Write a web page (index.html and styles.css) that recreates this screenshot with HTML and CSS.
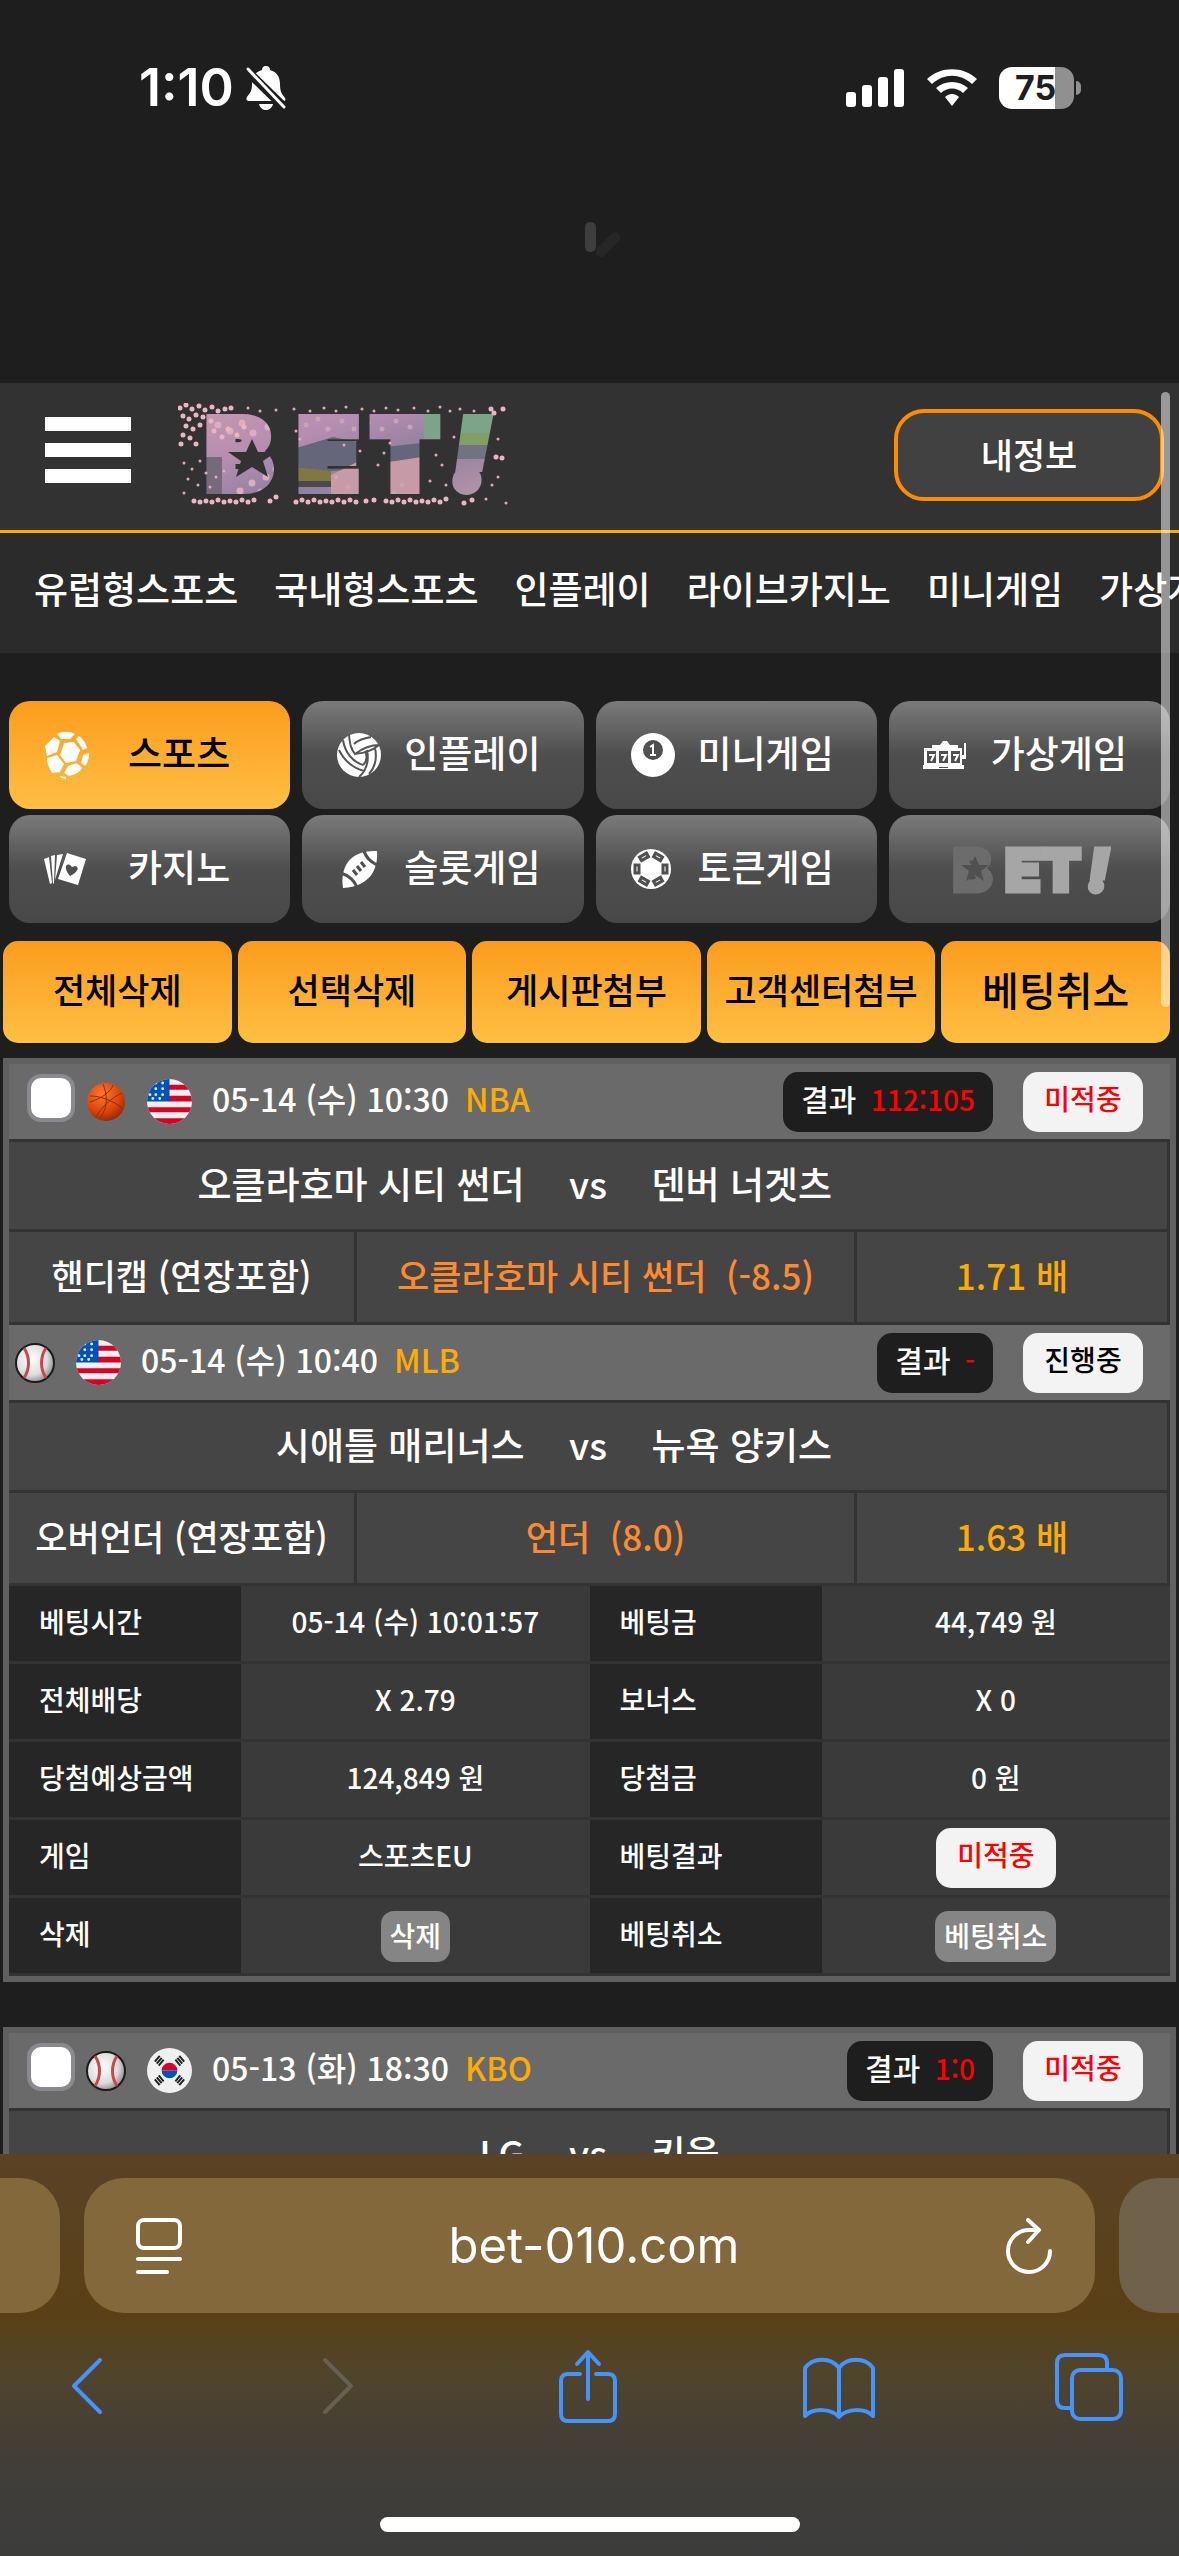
FILE: index.html
```html
<!DOCTYPE html>
<html lang="ko">
<head>
    <meta charset="UTF-8">
    <meta name="viewport" content="width=device-width, initial-scale=1.0">
    <title>BET!</title>
    <link rel="stylesheet" href="styles.css">
</head>
<body>
    <!-- shared icons -->
    <svg class="defs" width="0" height="0">
        <symbol id="basketball" viewBox="0 0 42 42">
            <circle cx="21" cy="21" r="19" fill="url(#orangeBall)"/>
            <path d="M5 15c10 0 22 4 32 12M18 3c4 10 6 24-4 35M37 12C28 16 16 26 11 36M28 4c-2 6-10 13-23 17" fill="none" stroke="#8e2f0a" stroke-width="1"/>
        </symbol>
        <symbol id="baseball" viewBox="0 0 42 42">
            <circle cx="21" cy="21" r="19" fill="url(#whiteBall)" stroke="#1b1b1b" stroke-width="2"/>
            <path d="M10 6c6 9 6 21 0 30M32 6c-6 9-6 21 0 30" fill="none" stroke="#c8474c" stroke-width="3"/>
        </symbol>
        <symbol id="usa" viewBox="0 0 46 46">
            <g clip-path="url(#round)">
                <path fill="#f0f0f0" d="M0 0h46v46H0z"/>
                <path fill="#d80027" d="M22 6h24v5H22zM22 17h24v6H22zM0 29h46v5H0zM0 40h46v6H0z"/>
                <path fill="#0052b4" d="M0 0h23v23H0z"/>
                <path d="M9 4h0M16 4h0M9 10h0M16 10h0M3 16h0M9 16h0M16 16h0M6 20h0M13 20h0" stroke="#d8e4f5" stroke-width="3" stroke-linecap="round"/>
            </g>
        </symbol>
        <symbol id="korea" viewBox="0 0 46 46">
            <circle cx="23" cy="23" r="23" fill="#f0f0f0"/>
            <path fill="#d80027" d="M15 23a8 8 0 0 1 16 0z"/>
            <path fill="#0052b4" d="M15 23a8 8 0 0 0 16 0z"/>
            <path d="M8 14l5-6M10 16l5-6M12 18l5-6M38 14l-5-6M36 16l-5-6M34 18l-5-6M8 32l5 6M10 30l5 6M12 28l5 6M38 32l-5 6M36 30l-5 6M34 28l-5 6" stroke="#222" stroke-width="2"/>
        </symbol>
        <defs>
            <radialGradient id="orangeBall" cx=".4" cy=".3" r=".8"><stop offset="0" stop-color="#ff7a2c"/><stop offset=".6" stop-color="#d94308"/><stop offset="1" stop-color="#7a2204"/></radialGradient>
            <radialGradient id="whiteBall" cx=".4" cy=".4" r=".7"><stop offset="0" stop-color="#fff"/><stop offset=".6" stop-color="#dcdcdc"/><stop offset="1" stop-color="#777"/></radialGradient>
            <clipPath id="round"><circle cx="23" cy="23" r="23"/></clipPath>
        </defs>
    </svg>

    <div class="top">
        <div class="status">
            <span class="time">1:10</span>
            <svg class="bell" width="42" height="44" viewBox="0 0 42 44">
                <path fill="#fff" d="M21 0c3 0 4 2 4 4 7 2 10 7 10 14 0 8 2 10 5 14 1 2 0 3-2 3H4c-3 0-3-2-2-4 3-4 5-6 5-13C7 11 10 6 17 4c0-2 1-4 4-4zM14 38h14c-1 4-4 6-7 6s-6-2-7-6z"/>
                <path d="M1 4l38 37" stroke="#1e1e1e" stroke-width="9"/>
                <path d="M3 3l36 38" stroke="#fff" stroke-width="3" stroke-linecap="round"/>
            </svg>
            <span class="spacer"></span>
            <svg width="58" height="38" viewBox="0 0 58 38" fill="#fff">
                <rect x="0" y="23" width="10" height="15" rx="3"/>
                <rect x="16" y="16" width="10" height="22" rx="3"/>
                <rect x="32" y="8" width="10" height="30" rx="3"/>
                <rect x="48" y="0" width="10" height="38" rx="3"/>
            </svg>
            <svg class="wifi" width="50" height="38" viewBox="0 0 50 38" fill="#fff">
                <path d="M0 10C14-3 36-3 50 10l-5 5C33 4 17 4 5 15z"/>
                <path d="M9 19c9-8 23-8 32 0l-5 5c-6-6-16-6-22 0z"/>
                <path d="M18 28c4-4 10-4 14 0l-7 9z"/>
            </svg>
            <span class="battery">75</span>
        </div>
        <svg class="spinner" width="80" height="80" viewBox="0 0 80 80">
            <rect x="35" y="0" width="11" height="30" rx="5" fill="#3e3e3e"/>
            <rect x="35" y="0" width="11" height="30" rx="5" fill="#262626" transform="rotate(45 40 40)"/>
        </svg>
    </div>

    <div class="page">
        <div class="header">
            <button class="menu" aria-label="메뉴"><i></i><i></i><i></i></button>
            <a href="#" class="logo">
                <svg width="330" height="104" viewBox="0 0 330 104">
                    <defs>
                        <linearGradient id="blossom" x1="0" y1="0" x2="1" y2="1">
                            <stop offset="0" stop-color="#c99bb0"/><stop offset=".35" stop-color="#b58db0"/>
                            <stop offset=".6" stop-color="#8e80a0"/><stop offset="1" stop-color="#c09aa8"/>
                        </linearGradient>
                        <mask id="word">
                            <g class="word"><text y="86" x="29 121 194">BET</text><text class="slant" y="86" x="274">!</text></g>
                        </mask>
                    </defs>
                    <g mask="url(#word)">
                        <path fill="url(#blossom)" d="M0 0h330v104H0z"/>
                        <path fill="#77697c" d="M20 54h24v44H20z"/>
                        <path fill="#66667a" d="M115 46l40-12 50 10 40-4v20l-90 8h-40z"/>
                        <path fill="#80793f" d="M115 64l38 4v14h-38z"/>
                        <path fill="#4e4650" d="M115 78h38v6h-38z"/>
                        <path fill="#7da388" d="M246 10h80v26h-80z"/>
                        <path fill="#7f9f66" d="M280 30h40v14h-40z"/>
                        <path fill="#6f7480" d="M276 42h40v14h-40z"/>
                        <path fill="#c79aa8" d="M153 72l40-20v44h-40zM204 60l40-6v44h-40z"/>
                        <path d="M40 22h0M52 28h0M64 20h0M75 30h0M90 24h0M100 34h0M62 88h0M88 74h0M74 80h0M98 66h0M106 44h0" stroke="#dcaec0" stroke-width="7" stroke-linecap="round"/>
                        <path d="M128 22h0M140 16h0M150 26h0M164 18h0M176 26h0M190 20h0M204 26h0M218 18h0M232 24h0M210 72h0M224 82h0M216 90h0M170 84h0M82 88h0M108 78h0" stroke="#c8a4b8" stroke-width="5" stroke-linecap="round"/>
                    </g>
                    <path fill="#323232" d="M74 36l6 13h18l-13 9 5 16-16-10-16 10 5-16-13-9h18z"/>
                    <path class="petals" d="M2 5h0M8 2h0M14 6h0M21 3h0M27 7h0M34 4h0M40 8h0M47 6h0M53 5h0M5 13h0M11 16h0M18 12h0M25 14h0M33 18h0M8 23h0M15 26h0M22 22h0M5 32h0M12 35h0M3 41h0M18 41h0M36 28h0M44 34h0M50 26h0M59 32h0M66 24h0"/>
                    <path class="petals" d="M16 98h0M22 99h0M28 98h0M34 99h0M40 97h0M46 99h0M52 98h0M58 99h0M64 97h0M70 99h0M76 97h0M92 98h0M98 94h0M118 99h0M124 97h0M130 99h0M136 97h0M142 99h0M148 98h0M154 99h0M160 97h0M166 99h0M172 97h0M178 99h0M188 98h0M196 97h0M208 98h0M214 99h0M220 97h0M226 99h0M232 97h0M238 99h0M244 98h0M250 99h0M256 97h0M262 99h0M268 96h0M286 100h0M294 97h0M316 10h0M313 6h0M325 6h0M318 54h0M324 55h0"/>
                    <path class="specks" d="M70 5h0M82 8h0M98 7h0M116 6h0M132 8h0M146 5h0M158 8h0M168 4h0M184 6h0M196 8h0M208 5h0M220 7h0M236 5h0M250 8h0M262 4h0M272 8h0M282 6h0M296 8h0M6 60h0M14 66h0M22 58h0M28 70h0M10 76h0M20 82h0M32 84h0M6 90h0M38 74h0M46 68h0M118 28h0M122 36h0M166 42h0M182 48h0M158 74h0M200 62h0M206 50h0M212 40h0M258 52h0M264 62h0M252 78h0M276 34h0M268 82h0M320 74h0M314 82h0M308 96h0M328 100h0M320 36h0"/>
                </svg>
            </a>
            <button class="my">내정보</button>
        </div>

        <div class="nav">
            <a href="#">유럽형스포츠</a>
            <a href="#">국내형스포츠</a>
            <a href="#">인플레이</a>
            <a href="#">라이브카지노</a>
            <a href="#">미니게임</a>
            <a href="#">가상게임</a>
        </div>

        <div class="games">
            <button class="game active">
                <svg viewBox="0 0 48 48" fill="#fff">
                    <path d="M15 3c6-3 12-3 18 0l-5 5h-9zM37 5c4 3 7 7 8 12l-4 2-7-11zM3 15l9-9 6 4-3 11-10 4zM22 12l10-1 6 8-4 11-10 2-6-8zM41 24l6-2c0 6-1 9-4 13l-4-3zM5 27l10-3 7 9-4 8-8 1C7 37 5 33 5 27zM26 35l9-3 5 5c-3 5-8 7-13 8l-5-3zM18 45l6 1v2l-5-1z"/>
                </svg>
                <span>스포츠</span>
            </button>
            <button class="game">
                <svg viewBox="0 0 48 48">
                    <circle cx="24" cy="24" r="22" fill="#fff"/>
                    <path d="M14 4c1 10 2 14 6 19 8-6 15-9 24-9M20 23c7-1 16-2 24-9M19 13c4-4 11-6 17-7M4 19c6 12 14 18 25 21M8 9c2 13 10 22 20 25M28 34c5-5 4-10 2-14M24 46c9-8 10-17 8-27M34 43c7-8 8-17 6-26" fill="none" stroke="#555" stroke-width="2"/>
                </svg>
                <span>인플레이</span>
            </button>
            <button class="game">
                <svg viewBox="0 0 48 48">
                    <circle cx="24" cy="24" r="22" fill="#fff"/>
                    <circle cx="24" cy="19" r="10" fill="#505050"/>
                    <path d="M21 16l3-2v10M21 24h6" fill="none" stroke="#fff" stroke-width="2"/>
                </svg>
                <span>미니게임</span>
            </button>
            <button class="game">
                <svg viewBox="0 0 48 48">
                    <path fill="#fff" d="M10 14h8l3-4h4l3 4h8v3h4v17H2V17h8zM42 12h2v16h-4v-4h2zM1 34h41v4H1z"/>
                    <path fill="#505050" d="M5 20h9v12H5zM17 20h9v12h-9zM29 20h9v12h-9zM17 36h9v1h-9z"/>
                    <path d="M7 24h5l-3 6M19 24h5l-3 6M31 24h5l-3 6" fill="none" stroke="#fff" stroke-width="2"/>
                </svg>
                <span>가상게임</span>
            </button>
            <button class="game">
                <svg viewBox="0 0 48 48">
                    <path fill="#fff" d="M2 14l5-2 3 26-2 1zM9 11l4-1-1 28-1 1zM15 10l6-1-8 26zM25 8l19 6-8 26-20-6z"/>
                    <path fill="#505050" d="M28 31c-7-8-4-13 0-11l2 2 3-1c5 1 3 6-5 10z"/>
                </svg>
                <span>카지노</span>
            </button>
            <button class="game">
                <svg viewBox="0 0 48 48">
                    <path fill="#fff" d="M42 6c1 15-4 35-34 37C5 24 13 5 42 6z"/>
                    <path d="M29 6c2 7 7 11 13 14M6 28c6 2 13 7 16 14" fill="none" stroke="#505050" stroke-width="3"/>
                    <path d="M18 25l4 5M22 21l4 5M26 17l4 5" stroke="#505050" stroke-width="3"/>
                </svg>
                <span>슬롯게임</span>
            </button>
            <button class="game">
                <svg viewBox="0 0 48 48">
                    <circle cx="22" cy="24" r="20" fill="#fff"/>
                    <g fill="#fff" stroke="#505050" stroke-width="3">
                        <path id="mark" d="M6 20h4v8H6z"/>
                        <use href="#mark" transform="rotate(60 22 24)"/>
                        <use href="#mark" transform="rotate(120 22 24)"/>
                        <use href="#mark" transform="rotate(180 22 24)"/>
                        <use href="#mark" transform="rotate(240 22 24)"/>
                        <use href="#mark" transform="rotate(300 22 24)"/>
                    </g>
                </svg>
                <span>토큰게임</span>
            </button>
            <button class="game brand">
                <svg width="164" height="52" viewBox="0 0 164 52">
                    <g class="small-word">
                        <text fill="#6c6c6c" stroke="#6c6c6c" y="48" x="6">B</text>
                        <text fill="#a6a6a6" stroke="#a6a6a6" y="48" x="58 94">ET</text>
                        <text class="slant" fill="#a6a6a6" stroke="#a6a6a6" y="48" x="140">!</text>
                    </g>
                    <path fill="#505050" d="M28 13l4 9h10l-8 6 3 10-9-6-9 6 3-10-8-6h10z"/>
                </svg>
            </button>
        </div>

        <div class="actions">
            <button>전체삭제</button>
            <button>선택삭제</button>
            <button>게시판첨부</button>
            <button>고객센터첨부</button>
            <button class="cancel">베팅취소</button>
        </div>

        <div class="bet">
            <div class="match-head">
                <input type="checkbox" aria-label="선택">
                <svg class="ball"><use href="#basketball"/></svg>
                <svg class="flag"><use href="#usa"/></svg>
                <span class="date">05-14 (수) 10:30</span>
                <span class="league">NBA</span>
                <span class="result">결과 <b>112:105</b></span>
                <span class="pill lose">미적중</span>
            </div>
            <div class="teams"><span>오클라호마 시티 썬더</span><span>vs</span><span>덴버 너겟츠</span></div>
            <div class="odds"><span>핸디캡 (연장포함)</span><span class="pick">오클라호마 시티 썬더&nbsp; (-8.5)</span><span class="rate">1.71 배</span></div>

            <div class="match-head">
                <svg class="ball"><use href="#baseball"/></svg>
                <svg class="flag"><use href="#usa"/></svg>
                <span class="date">05-14 (수) 10:40</span>
                <span class="league">MLB</span>
                <span class="result">결과 <b>-</b></span>
                <span class="pill">진행중</span>
            </div>
            <div class="teams"><span>시애틀 매리너스</span><span>vs</span><span>뉴욕 양키스</span></div>
            <div class="odds"><span>오버언더 (연장포함)</span><span class="pick">언더&nbsp; (8.0)</span><span class="rate">1.63 배</span></div>

            <table class="detail">
                <tr>
                    <th>베팅시간</th><td>05-14 (수) 10:01:57</td>
                    <th>베팅금</th><td>44,749 원</td>
                </tr>
                <tr>
                    <th>전체배당</th><td>X 2.79</td>
                    <th>보너스</th><td>X 0</td>
                </tr>
                <tr>
                    <th>당첨예상금액</th><td>124,849 원</td>
                    <th>당첨금</th><td>0 원</td>
                </tr>
                <tr>
                    <th>게임</th><td>스포츠EU</td>
                    <th>베팅결과</th><td><span class="pill lose">미적중</span></td>
                </tr>
                <tr>
                    <th>삭제</th><td><button>삭제</button></td>
                    <th>베팅취소</th><td><button>베팅취소</button></td>
                </tr>
            </table>
        </div>

        <div class="bet">
            <div class="match-head">
                <input type="checkbox" aria-label="선택">
                <svg class="ball"><use href="#baseball"/></svg>
                <svg class="flag"><use href="#korea"/></svg>
                <span class="date">05-13 (화) 18:30</span>
                <span class="league">KBO</span>
                <span class="result">결과 <b>1:0</b></span>
                <span class="pill lose">미적중</span>
            </div>
            <div class="teams"><span>LG</span><span>vs</span><span>키움</span></div>
        </div>
        <div class="scrollbar"></div>
    </div>

    <div class="browser">
        <div class="tabs">
            <div class="tab side"></div>
            <div class="tab address">
                <button aria-label="페이지 메뉴">
                    <svg width="46" height="56" viewBox="0 0 46 56" fill="none" stroke="#fff" stroke-width="4" stroke-linecap="round">
                        <rect x="2" y="2" width="42" height="28" rx="6"/><path d="M2 41h42M2 54h29"/>
                    </svg>
                </button>
                <span>bet-010.com</span>
                <button aria-label="새로고침">
                    <svg width="46" height="56" viewBox="0 0 46 56" fill="none" stroke="#fff" stroke-width="4" stroke-linecap="round" stroke-linejoin="round">
                        <path d="M44 33a21 21 0 1 1-21-21h10M22 2l11 10-11 12"/>
                    </svg>
                </button>
            </div>
            <div class="tab side"></div>
        </div>
        <div class="toolbar">
            <button aria-label="뒤로"><svg width="34" height="76" viewBox="0 0 34 76"><path d="M30 12L4 38l26 26"/></svg></button>
            <button aria-label="앞으로" disabled><svg width="34" height="76" viewBox="0 0 34 76"><path d="M4 12l26 26L4 64"/></svg></button>
            <button aria-label="공유"><svg width="60" height="76" viewBox="0 0 60 76"><path d="M22 26H10q-7 0-7 7v33q0 7 7 7h40q7 0 7-7V33q0-7-7-7H38M30 51V5M19 16L30 4l11 12"/></svg></button>
            <button aria-label="책갈피"><svg width="74" height="76" viewBox="0 0 74 76"><path d="M37 20C29 9 11 9 3 20v48c8-8 26-8 34 1 8-9 26-9 34-1V20C63 9 45 9 37 20zM37 20v49"/></svg></button>
            <button aria-label="탭"><svg width="70" height="76" viewBox="0 0 70 76"><path d="M18 60h-7q-8 0-8-8V15q0-8 8-8h34q8 0 8 8v7"/><rect x="18" y="22" width="49" height="49" rx="8"/></svg></button>
        </div>
        <div class="home"></div>
    </div>
</body>
</html>
```
FILE: styles.css
```css
* {
    box-sizing: border-box;
}

body {
    margin: 0;
    height: 100vh;
    display: flex;
    flex-direction: column;
    overflow: hidden;
    background: #1e1e1e;
    color: #fff;
    font-family: "Noto Sans CJK KR", sans-serif;
    font-weight: 500;
}

button {
    padding: 0;
    border: none;
    background: none;
    color: inherit;
    font-family: inherit;
    font-weight: inherit;
}

svg {
    display: block;
    flex: none;
}

.defs {
    position: absolute;
}

/* phone status bar */
.top {
    flex: none;
    height: 383px;
}

.status {
    display: flex;
    align-items: center;
    height: 112px;
    padding: 64px 105px 0 139px;
}

.time {
    font: 600 52px/48px Inter, sans-serif;
}

.bell {
    margin-left: 11px;
}

.spacer {
    flex: 1;
}

.wifi {
    margin: 0 22px 0 23px;
}

.battery {
    position: relative;
    width: 75px;
    height: 42px;
    padding-left: 16px;
    border-radius: 13px;
    background: linear-gradient(90deg, #fff 75%, #909090 75%);
    color: #1e1e1e;
    font: 700 34px/42px Inter, sans-serif;
}

.battery::after {
    content: "";
    position: absolute;
    left: 77px;
    top: 14px;
    width: 5px;
    height: 14px;
    border-radius: 0 5px 5px 0;
    background: #909090;
}

.spinner {
    margin: 110px auto 0;
}

/* site */
.page {
    position: relative;
    flex: 1;
    min-height: 0;
    overflow: hidden;
}

.scrollbar {
    position: absolute;
    top: 9px;
    right: 9px;
    width: 9px;
    height: 615px;
    border-radius: 5px;
    background: rgba(255, 255, 255, 0.5);
}

.header {
    display: flex;
    align-items: center;
    height: 150px;
    padding: 0 15px 3px 45px;
    border-bottom: 3px solid #ffab00;
    background: #323232;
}

.menu {
    display: flex;
    flex-direction: column;
    gap: 12px;
    width: 86px;
    margin-bottom: 10px;
}

.menu i {
    height: 14px;
    background: #fff;
}

.logo {
    margin: 0 auto 0 47px;
}

.word {
    fill: #fff;
    stroke: #fff;
    stroke-width: 10;
    font: 900 96px Inter, sans-serif;
}

.small-word {
    stroke-width: 5;
    font: 900 58px Inter, sans-serif;
}

.slant {
    font-style: italic;
}

.petals {
    stroke: #eeb4c4;
    stroke-width: 5;
    stroke-linecap: round;
}

.specks {
    stroke: #e3aabb;
    stroke-width: 3;
    stroke-linecap: round;
}

.my {
    width: 270px;
    height: 92px;
    padding-bottom: 4px;
    border: 4px solid #ff8c00;
    border-radius: 30px;
    background: #414141;
    font-size: 35px;
}

.nav {
    display: flex;
    gap: 36px;
    height: 120px;
    padding-left: 34px;
    background: #2b2b2b;
    font-size: 37px;
    line-height: 110px;
    white-space: nowrap;
}

.nav a {
    color: #fff;
    text-decoration: none;
}

.games {
    display: grid;
    grid-template-columns: repeat(4, 1fr);
    gap: 6px 12px;
    margin-top: 48px;
    padding: 0 9px;
}

.game {
    display: flex;
    align-items: center;
    height: 108px;
    padding: 0 22px 0 33px;
    border-radius: 21px;
    background: linear-gradient(#7a7a7a, #4e4e4e 50%, #484848);
    font-size: 37px;
}

.game svg {
    width: 48px;
    height: 48px;
}

.game span {
    flex: 1;
    padding-bottom: 7px;
    text-align: center;
}

.game.active {
    background: linear-gradient(#fc9c1e, #ffbf42);
    color: #000;
}

.game.brand {
    justify-content: center;
    padding: 0;
}

.game.brand svg {
    width: 164px;
    height: 52px;
}

.actions {
    display: grid;
    grid-template-columns: repeat(5, 1fr);
    gap: 6px;
    margin-top: 18px;
    padding: 0 9px 0 3px;
}

.actions button {
    height: 102px;
    padding-bottom: 7px;
    border-radius: 15px;
    background: linear-gradient(#fc9c1e, #ffbf42);
    color: #000;
    font-size: 35px;
    white-space: nowrap;
}

.actions .cancel {
    font-size: 40px;
}

.bet {
    margin: 15px 3px 45px;
    border: 6px solid #606060;
}

.bet + .bet {
    margin-top: 0;
}

.match-head {
    display: flex;
    align-items: center;
    height: 75px;
    padding: 0 27px 0 5px;
    background: #6a6a6a;
}

.match-head input {
    appearance: none;
    width: 48px;
    height: 48px;
    margin: 0 10px 8px 13px;
    border: 4px solid #8a8a8e;
    border-radius: 14px;
    background: #fff;
}

.ball {
    width: 42px;
    height: 42px;
    margin-right: 20px;
}

.flag {
    width: 45px;
    height: 45px;
    margin-right: 20px;
}

.date,
.league {
    padding-bottom: 7px;
    font-size: 32px;
}

.league {
    margin: 0 auto 0 16px;
    color: #ffab00;
}

.result,
.pill {
    display: inline-block;
    height: 60px;
    border-radius: 15px;
    font-size: 28px;
    line-height: 53px;
}

.result {
    margin-right: 30px;
    padding: 0 18px;
    background: #1e1e1e;
    font-size: 30px;
}

.result b {
    margin-left: 6px;
    color: #f00;
    font-size: 28px;
    font-weight: 500;
}

.pill {
    width: 120px;
    background: #f3f3f3;
    color: #000;
    text-align: center;
}

.pill.lose {
    color: #f00;
}

.teams,
.odds {
    display: grid;
    border-right: 3px solid #333;
    border-bottom: 3px solid #333;
    background: #454545;
    text-align: center;
    white-space: nowrap;
}

.teams span,
.odds span {
    padding-bottom: 4px;
}

.teams {
    grid-template-columns: 1fr 127px 1fr;
    border-top: 3px solid #333;
    font-size: 37px;
    line-height: 83px;
}

.teams span:first-child {
    text-align: right;
}

.teams span:last-child {
    text-align: left;
}

.odds {
    grid-template-columns: 345fr 500fr 313fr;
    font-size: 35px;
    line-height: 86px;
}

.odds span + span {
    border-left: 3px solid #333;
}

.pick {
    color: #ff8a2f;
}

.rate {
    color: #ffab00;
}

.detail {
    width: 100%;
    table-layout: fixed;
    border-spacing: 0;
    font-size: 28px;
    line-height: 64px;
}

.detail th,
.detail td {
    height: 78px;
    padding: 0 0 6px;
    border-bottom: 3px solid #333;
}

.detail th {
    width: 20%;
    padding-left: 30px;
    background: #262626;
    font-weight: 500;
    text-align: left;
}

.detail td {
    background: #3a3a3a;
    text-align: center;
}

.detail .pill {
    vertical-align: middle;
}

.detail button {
    height: 51px;
    padding: 0 9px 3px;
    border-radius: 13px;
    background: #858585;
    font-size: 28px;
    line-height: 48px;
    vertical-align: middle;
}

/* browser bar */
.browser {
    flex: none;
    background: linear-gradient(#5a4226, #5a4015 40%, #50442a 54%, #453f36 70%, #3e3d3a 84%, #3c3c3c);
}

.tabs {
    display: flex;
    gap: 24px;
    padding-top: 24px;
}

.tab {
    height: 135px;
    background: #83683c;
}

.tab.side {
    width: 60px;
    border-radius: 0 40px 40px 0;
}

.tab.side:last-child {
    border-radius: 40px 0 0 40px;
    background: #70614a;
}

.address {
    display: flex;
    flex: 1;
    align-items: center;
    justify-content: space-between;
    padding: 0 43px 0 52px;
    border-radius: 40px;
    font: 400 49px/60px Inter, sans-serif;
}

.toolbar {
    display: flex;
    justify-content: space-between;
    padding: 35px 53px 0 50px;
}

.toolbar button {
    display: flex;
    justify-content: center;
    width: 74px;
}

.toolbar svg {
    fill: none;
    stroke: #4593ff;
    stroke-width: 4;
    stroke-linecap: round;
    stroke-linejoin: round;
}

.toolbar button:disabled svg {
    stroke: #675f52;
}

.home {
    width: 420px;
    height: 15px;
    margin: 93px auto 24px;
    border-radius: 8px;
    background: #fff;
}
```
